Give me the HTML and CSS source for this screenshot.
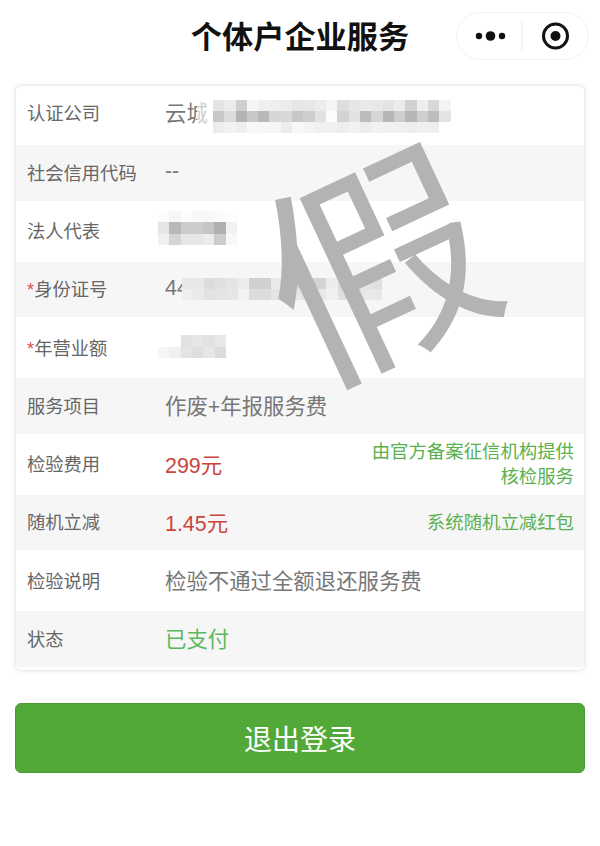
FILE: index.html
```html
<!DOCTYPE html>
<html lang="zh-CN">
<head>
<meta charset="UTF-8">
<meta name="viewport" content="width=device-width, initial-scale=1.0">
<title>个体户企业服务</title>
<link rel="stylesheet" href="styles.css">
</head>
<body>

<div class="page">
    <div class="nav">
        <div class="nav-title">个体户企业服务</div>
        <div class="capsule">
            <svg width="133" height="48" viewBox="0 0 133 48">
                <circle cx="23" cy="24" r="3.2" fill="#111"/>
                <circle cx="34.5" cy="24" r="4.8" fill="#111"/>
                <circle cx="46" cy="24" r="3.2" fill="#111"/>
                <line x1="66" y1="10" x2="66" y2="38" stroke="#e6e6e6" stroke-width="1"/>
                <circle cx="99.5" cy="24" r="12" fill="none" stroke="#111" stroke-width="3"/>
                <circle cx="99.5" cy="24" r="5" fill="#111"/>
            </svg>
        </div>
    </div>

    <div class="card">
        <div class="row">
            <div class="label">认证公司</div>
            <div class="value">
                <span>云城</span>
                <svg class="mosaic mosaic-company" width="256" height="33" viewBox="-1.4 0 22.6 3" preserveAspectRatio="none" shape-rendering="crispEdges">
                    <rect x="-1.4" y="0" width="1.4" height="3" fill="#fff" fill-opacity=".65"/>
                    <rect x="0" y="0" width="1" height="1" fill="#e4e4e4"/><rect x="1" y="0" width="1" height="1" fill="#ececec"/><rect x="2" y="0" width="1" height="1" fill="#cfcfcf"/><rect x="3" y="0" width="1" height="1" fill="#f6f6f6"/><rect x="4" y="0" width="1" height="1" fill="#f0f0f0"/><rect x="5" y="0" width="1" height="1" fill="#eeeeee"/><rect x="6" y="0" width="1" height="1" fill="#ececec"/><rect x="7" y="0" width="1" height="1" fill="#e6e6e6"/><rect x="8" y="0" width="1" height="1" fill="#e8e8e8"/><rect x="9" y="0" width="1" height="1" fill="#ececec"/><rect x="10" y="0" width="1" height="1" fill="#f4f4f4"/><rect x="11" y="0" width="1" height="1" fill="#dddddd"/><rect x="12" y="0" width="1" height="1" fill="#e6e6e6"/><rect x="13" y="0" width="1" height="1" fill="#eaeaea"/><rect x="14" y="0" width="1" height="1" fill="#e8e8e8"/><rect x="15" y="0" width="1" height="1" fill="#e4e4e4"/><rect x="16" y="0" width="1" height="1" fill="#ececec"/><rect x="17" y="0" width="1" height="1" fill="#d2d2d2"/><rect x="18" y="0" width="1" height="1" fill="#eeeeee"/><rect x="19" y="0" width="1" height="1" fill="#d8d8d8"/><rect x="20" y="0" width="1" height="1" fill="#f3f3f3"/>
                    <rect x="0" y="1" width="1" height="1" fill="#c8c8c8"/><rect x="1" y="1" width="1" height="1" fill="#dcdcdc"/><rect x="2" y="1" width="1" height="1" fill="#b4b4b4"/><rect x="3" y="1" width="1" height="1" fill="#c8c8c8"/><rect x="4" y="1" width="1" height="1" fill="#b8b8b8"/><rect x="5" y="1" width="1" height="1" fill="#d6d6d6"/><rect x="6" y="1" width="1" height="1" fill="#d8d8d8"/><rect x="7" y="1" width="1" height="1" fill="#c6c6c6"/><rect x="8" y="1" width="1" height="1" fill="#cecece"/><rect x="9" y="1" width="1" height="1" fill="#e2e2e2"/><rect x="10" y="1" width="1" height="1" fill="#fcfcfc"/><rect x="11" y="1" width="1" height="1" fill="#d2d2d2"/><rect x="12" y="1" width="1" height="1" fill="#e2e2e2"/><rect x="13" y="1" width="1" height="1" fill="#bcbcbc"/><rect x="14" y="1" width="1" height="1" fill="#d6d6d6"/><rect x="15" y="1" width="1" height="1" fill="#b6b6b6"/><rect x="16" y="1" width="1" height="1" fill="#cecece"/><rect x="17" y="1" width="1" height="1" fill="#b6b6b6"/><rect x="18" y="1" width="1" height="1" fill="#cecece"/><rect x="19" y="1" width="1" height="1" fill="#bcbcbc"/><rect x="20" y="1" width="1" height="1" fill="#e4e4e4"/>
                    <rect x="0" y="2" width="1" height="1" fill="#ececec"/><rect x="1" y="2" width="1" height="1" fill="#f2f2f2"/><rect x="2" y="2" width="1" height="1" fill="#eeeeee"/><rect x="3" y="2" width="1" height="1" fill="#f8f8f8"/><rect x="4" y="2" width="1" height="1" fill="#f6f6f6"/><rect x="5" y="2" width="1" height="1" fill="#f6f6f6"/><rect x="6" y="2" width="1" height="1" fill="#ececec"/><rect x="7" y="2" width="1" height="1" fill="#f8f8f8"/><rect x="8" y="2" width="1" height="1" fill="#f4f4f4"/><rect x="9" y="2" width="1" height="1" fill="#f0f0f0"/><rect x="10" y="2" width="1" height="1" fill="#f0f0f0"/><rect x="11" y="2" width="1" height="1" fill="#eeeeee"/><rect x="12" y="2" width="1" height="1" fill="#f2f2f2"/><rect x="13" y="2" width="1" height="1" fill="#ececec"/><rect x="14" y="2" width="1" height="1" fill="#f2f2f2"/><rect x="15" y="2" width="1" height="1" fill="#f0f0f0"/><rect x="16" y="2" width="1" height="1" fill="#f0f0f0"/><rect x="17" y="2" width="1" height="1" fill="#eeeeee"/><rect x="18" y="2" width="1" height="1" fill="#f0f0f0"/><rect x="19" y="2" width="1" height="1" fill="#eeeeee"/>
                </svg>
            </div>
        </div>
        <div class="row">
            <div class="label">社会信用代码</div>
            <div class="value">--</div>
        </div>
        <div class="row">
            <div class="label">法人代表</div>
            <div class="value">
                <svg class="mosaic mosaic-name" width="79" height="34" viewBox="0 0 7 3" preserveAspectRatio="none" shape-rendering="crispEdges">
                    <rect x="0" y="0" width="1" height="1" fill="#fcfcfc"/><rect x="1" y="0" width="1" height="1" fill="#f6f6f6"/><rect x="2" y="0" width="1" height="1" fill="#fdfdfd"/><rect x="3" y="0" width="1" height="1" fill="#f8f8f8"/><rect x="4" y="0" width="1" height="1" fill="#f8f8f8"/><rect x="5" y="0" width="1" height="1" fill="#fbfbfb"/><rect x="6" y="0" width="1" height="1" fill="#fdfdfd"/>
                    <rect x="0" y="1" width="1" height="1" fill="#e6e6e6"/><rect x="1" y="1" width="1" height="1" fill="#b8b8b8"/><rect x="2" y="1" width="1" height="1" fill="#cccccc"/><rect x="3" y="1" width="1" height="1" fill="#cccccc"/><rect x="4" y="1" width="1" height="1" fill="#c4c4c4"/><rect x="5" y="1" width="1" height="1" fill="#b0b0b0"/><rect x="6" y="1" width="1" height="1" fill="#f2f2f2"/>
                    <rect x="0" y="2" width="1" height="1" fill="#f0f0f0"/><rect x="1" y="2" width="1" height="1" fill="#d4d4d4"/><rect x="2" y="2" width="1" height="1" fill="#e6e6e6"/><rect x="3" y="2" width="1" height="1" fill="#e6e6e6"/><rect x="4" y="2" width="1" height="1" fill="#ececec"/><rect x="5" y="2" width="1" height="1" fill="#cccccc"/><rect x="6" y="2" width="1" height="1" fill="#f8f8f8"/>
                </svg>
            </div>
        </div>
        <div class="row">
            <div class="label"><i class="star">*</i>身份证号</div>
            <div class="value">
                <span>44</span>
                <svg class="mosaic mosaic-id" width="200" height="22" viewBox="0 0 18 2" preserveAspectRatio="none" shape-rendering="crispEdges">
                    <rect x="0" y="0" width="1" height="1" fill="#e8e8e8"/><rect x="1" y="0" width="1" height="1" fill="#e8e8e8"/><rect x="2" y="0" width="1" height="1" fill="#dcdcdc"/><rect x="3" y="0" width="1" height="1" fill="#e0e0e0"/><rect x="4" y="0" width="1" height="1" fill="#e4e4e4"/><rect x="5" y="0" width="1" height="1" fill="#ececec"/><rect x="6" y="0" width="1" height="1" fill="#d0d0d0"/><rect x="7" y="0" width="1" height="1" fill="#d0d0d0"/><rect x="8" y="0" width="1" height="1" fill="#eaeaea"/><rect x="9" y="0" width="1" height="1" fill="#eaeaea"/><rect x="10" y="0" width="1" height="1" fill="#d6d6d6"/><rect x="11" y="0" width="1" height="1" fill="#d6d6d6"/><rect x="12" y="0" width="1" height="1" fill="#d4d4d4"/><rect x="13" y="0" width="1" height="1" fill="#ececec"/><rect x="14" y="0" width="1" height="1" fill="#d8d8d8"/><rect x="15" y="0" width="1" height="1" fill="#e4e4e4"/><rect x="16" y="0" width="1" height="1" fill="#e4e4e4"/><rect x="17" y="0" width="1" height="1" fill="#e0e0e0"/>
                    <rect x="0" y="1" width="1" height="1" fill="#eeeeee"/><rect x="1" y="1" width="1" height="1" fill="#eaeaea"/><rect x="2" y="1" width="1" height="1" fill="#e2e2e2"/><rect x="3" y="1" width="1" height="1" fill="#e4e4e4"/><rect x="4" y="1" width="1" height="1" fill="#e6e6e6"/><rect x="5" y="1" width="1" height="1" fill="#f2f2f2"/><rect x="6" y="1" width="1" height="1" fill="#dcdcdc"/><rect x="7" y="1" width="1" height="1" fill="#dcdcdc"/><rect x="8" y="1" width="1" height="1" fill="#e4e4e4"/><rect x="9" y="1" width="1" height="1" fill="#e6e6e6"/><rect x="10" y="1" width="1" height="1" fill="#e6e6e6"/><rect x="11" y="1" width="1" height="1" fill="#e2e2e2"/><rect x="12" y="1" width="1" height="1" fill="#e8e8e8"/><rect x="13" y="1" width="1" height="1" fill="#f0f0f0"/><rect x="14" y="1" width="1" height="1" fill="#e0e0e0"/><rect x="15" y="1" width="1" height="1" fill="#f0f0f0"/><rect x="16" y="1" width="1" height="1" fill="#e8e8e8"/><rect x="17" y="1" width="1" height="1" fill="#e8e8e8"/>
                </svg>
            </div>
        </div>
        <div class="row">
            <div class="label"><i class="star">*</i>年营业额</div>
            <div class="value">
                <svg class="mosaic mosaic-income" width="68" height="23" viewBox="0 0 6 2" preserveAspectRatio="none" shape-rendering="crispEdges">
                    <rect x="2" y="0" width="1" height="1" fill="#e2e2e2"/><rect x="3" y="0" width="1" height="1" fill="#e6e6e6"/><rect x="4" y="0" width="1" height="1" fill="#e2e2e2"/><rect x="5" y="0" width="1" height="1" fill="#e8e8e8"/>
                    <rect x="0" y="1" width="1" height="1" fill="#f6f6f6"/><rect x="1" y="1" width="1" height="1" fill="#f0f0f0"/><rect x="2" y="1" width="1" height="1" fill="#e4e4e4"/><rect x="3" y="1" width="1" height="1" fill="#dedede"/><rect x="4" y="1" width="1" height="1" fill="#e6e6e6"/><rect x="5" y="1" width="1" height="1" fill="#dcdcdc"/>
                </svg>
            </div>
        </div>
        <div class="row">
            <div class="label">服务项目</div>
            <div class="value">作废+年报服务费</div>
        </div>
        <div class="row">
            <div class="label">检验费用</div>
            <div class="value price">299元</div>
            <div class="note">由官方备案征信机构提供<br>核检服务</div>
        </div>
        <div class="row">
            <div class="label">随机立减</div>
            <div class="value price">1.45元</div>
            <div class="note">系统随机立减红包</div>
        </div>
        <div class="row">
            <div class="label">检验说明</div>
            <div class="value">检验不通过全额退还服务费</div>
        </div>
        <div class="row">
            <div class="label">状态</div>
            <div class="value paid">已支付</div>
        </div>
    </div>

    <div class="fake-mark">假</div>

    <button class="logout">退出登录</button>
</div>

</body>
</html>
```

FILE: styles.css
```css
* {
    box-sizing: border-box;
}
body {
    margin: 0;
    background-color: #fff;
    font-family: "Liberation Sans", "Noto Sans CJK SC", sans-serif;
    color: #666;
}
.page {
    position: relative;
    height: 846px;
    padding: 0 15px 0 16px;
    overflow: hidden;
}
.nav {
    display: grid;
    grid-template-columns: 1fr auto 1fr;
    align-items: center;
    height: 72px;
    margin: 0 -15px 0 -16px;
}
.nav-title {
    grid-column: 2;
    margin-top: -4px;
    font-size: 31.2px;
    font-weight: 600;
    color: #111;
}
.capsule {
    grid-column: 3;
    justify-self: end;
    width: 133px;
    height: 48px;
    margin-right: 11px;
    border: 1px solid #f1f1f3;
    border-radius: 24px;
}
.capsule svg {
    display: block;
    margin: -1px;
}
.card {
    margin-top: 14px;
    width: 568px;
    padding-bottom: 3px;
    background-color: #fff;
    border-radius: 5px;
    box-shadow: 0 0 4px rgba(120,120,160,0.35);
    overflow: hidden;
}
.row {
    display: flex;
    align-items: center;
    height: 61px;
    padding: 0 10px 0 11px;
}
.row:nth-child(even) {
    height: 55.5px;
    background-color: #f6f6f7;
}
.row:first-child {
    height: 59px;
}
.row:first-child .label {
    margin-bottom: 8px;
}
.row:first-child .value span {
    margin-bottom: 6px;
}
.label {
    flex: none;
    width: 138px;
    margin-bottom: 2px;
    font-size: 18.3px;
    color: #666;
}
.star {
    font-style: normal;
    color: #d9534f;
}
.value {
    display: flex;
    align-items: center;
    flex: 1;
    margin-bottom: 2px;
    font-size: 21.4px;
    color: #777;
}
.price {
    color: #c9453d;
}
.paid {
    color: #5cb85c;
}
.note {
    font-size: 18.4px;
    line-height: 25px;
    text-align: right;
    color: #5cb04f;
}
.mosaic {
    flex: none;
    filter: blur(0.5px);
}
.mosaic-company {
    margin: 4px 0 0 -11px;
}
.mosaic-name {
    margin: -4px 0 0 -7px;
}
.mosaic-id {
    margin: 2px 0 0 -7px;
}
.mosaic-income {
    margin: 0 0 0 -7px;
}
.fake-mark {
    position: absolute;
    left: 260px;
    top: 120px;
    font-size: 222px;
    line-height: 1.2;
    color: #b3b3b3;
    font-family: "Noto Sans CJK SC", sans-serif;
    transform: rotate(-25deg);
}
.logout {
    display: block;
    width: 570px;
    height: 70px;
    margin: 33px 0 0 -1px;
    background-color: #52a938;
    border: 1px solid #4b9a34;
    border-radius: 6px;
    color: #fff;
    font-family: inherit;
    font-size: 28px;
}
```
